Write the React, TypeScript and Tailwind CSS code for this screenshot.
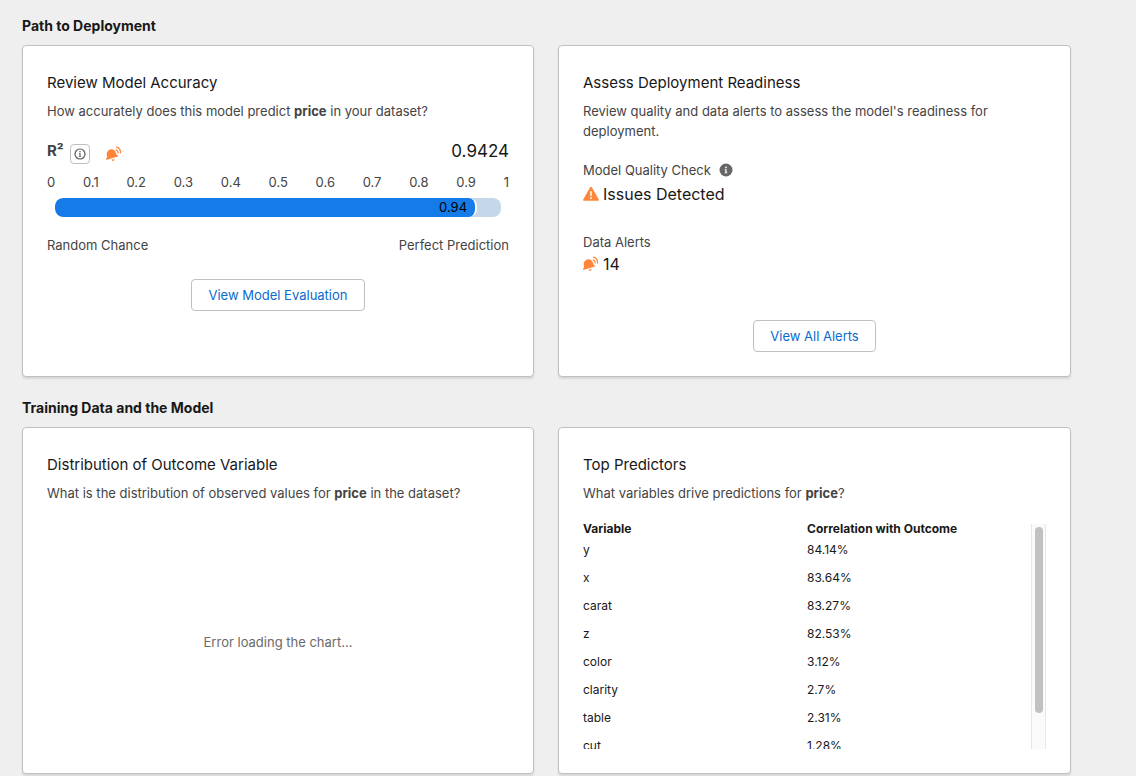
import type { ReactNode } from "react";

const predictors = [
  ["y", "84.14%"],
  ["x", "83.64%"],
  ["carat", "83.27%"],
  ["z", "82.53%"],
  ["color", "3.12%"],
  ["clarity", "2.7%"],
  ["table", "2.31%"],
  ["cut", "1.28%"],
];

const ticks = ["0", "0.1", "0.2", "0.3", "0.4", "0.5", "0.6", "0.7", "0.8", "0.9", "1"];

function BellIcon() {
  return (
    <svg viewBox="0 0 48 48" className="size-4 shrink-0 text-[#ff8538]" fill="none" aria-hidden="true">
      <path
        fill="currentColor"
        d="M3 41c-2.500.8-3.800-1.500-2-3.500 2.500-3 2.500-6 1.500-10C.9 20 5 12.500 12.500 10.500c7-2 13 1 16 7 2 4 1.800 7 3.500 9 1 1.200 2 1.500 3.500 1.700 2.300.3 2.500 2.800.3 3.600Z"
      />
      <path fill="currentColor" d="M16.500 41.500l8.500-2.800c1 2.500-.2 5-3 5.800-2.600.7-4.900-.5-5.500-3Z" />
      <path stroke="currentColor" strokeWidth="3.600" strokeLinecap="round" d="M30.500 11.500c3.800 1.500 6 5 6 9.500M31.500 3.500c8 1.800 12.500 8.500 12 17.500" />
    </svg>
  );
}

function WarningIcon() {
  return (
    <svg viewBox="0 0 16 16" className="size-4 shrink-0" aria-hidden="true">
      <path
        fill="#ff8538"
        d="M7.200 1.300c.35-.7 1.250-.7 1.600 0l7 12.100c.4.7 0 1.300-.7 1.300H.9c-.7 0-1.100-.6-.7-1.300z"
      />
      <path d="M8 5.800v3.800" stroke="#fff" strokeWidth="1.500" strokeLinecap="round" />
      <circle cx="8" cy="12" r=".95" fill="#fff" />
    </svg>
  );
}

function InfoSolidIcon() {
  return (
    <svg viewBox="0 0 14 14" className="size-3.5" aria-hidden="true">
      <circle cx="7" cy="7" r="6.500" fill="#666" />
      <circle cx="7" cy="4.400" r=".9" fill="#fff" />
      <path d="M5.700 6.200H7.600V9.500H8.400V10.200H5.600V9.500H6.300V6.900H5.700z" fill="#fff" />
    </svg>
  );
}

function InfoOutlineIcon() {
  return (
    <svg viewBox="0 0 12 12" className="size-3" aria-hidden="true">
      <circle cx="6" cy="6" r="5" fill="none" stroke="#5c5c5c" strokeWidth="1.200" />
      <circle cx="6" cy="3.700" r=".8" fill="#5c5c5c" />
      <path d="M4.900 5.200H6.600V8H7.300V8.700H4.700V8H5.400V5.900H4.900z" fill="#5c5c5c" />
    </svg>
  );
}

function Card({ title, text, children }: { title: string; text: ReactNode; children: ReactNode }) {
  return (
    <article className="flex flex-col rounded border border-[#c0c0c0] bg-white p-6 shadow-[0_2px_2px_rgba(0,0,0,0.1)]">
      <h3 className="text-[15px] leading-[26px] text-[#181818]">{title}</h3>
      <p className="mt-[5px] text-[13px] leading-5">{text}</p>
      {children}
    </article>
  );
}

function ActionButton({ children }: { children: ReactNode }) {
  return (
    <button
      type="button"
      className="h-8 self-center rounded border border-[#c0c0c0] bg-white px-4 pt-0.5 text-[13px] text-[#0b6bcb]"
    >
      {children}
    </button>
  );
}

function AccuracyCard() {
  const score = 0.9424;
  return (
    <Card
      title="Review Model Accuracy"
      text={
        <>
          How accurately does this model predict <b>price</b> in your dataset?
        </>
      }
    >
      <div className="mt-4 flex h-7 items-center">
        <span className="text-[15px] font-bold">R²</span>
        <button
          type="button"
          aria-label="About R²"
          className="mt-1.5 ml-1.5 flex size-5 items-center justify-center rounded-sm border border-[#c0c0c0] bg-white"
        >
          <InfoOutlineIcon />
        </button>
        <span className="mt-1.5 ml-4">
          <BellIcon />
        </span>
        <span className="ml-auto text-[17px] leading-7 text-[#181818]">{score}</span>
      </div>
      <div className="mt-[7px] flex justify-between text-[13px] leading-5">
        {ticks.map((tick) => (
          <span key={tick}>{tick}</span>
        ))}
      </div>
      <div className="mx-2 mt-1.5 h-[19px] overflow-hidden rounded-lg bg-[#c5d8ea]">
        <div
          className="h-full rounded-lg border-r-2 border-white bg-[#147be8] pr-2 text-right text-[13px] leading-[19px] text-black"
          style={{ width: `${score * 100 + 0.4}%` }}
        >
          0.94
        </div>
      </div>
      <div className="mt-[18px] flex justify-between text-[13px] leading-5">
        <span>Random Chance</span>
        <span>Perfect Prediction</span>
      </div>
      <div className="mt-6 flex flex-col">
        <ActionButton>View Model Evaluation</ActionButton>
      </div>
    </Card>
  );
}

function ReadinessCard() {
  return (
    <Card
      title="Assess Deployment Readiness"
      text="Review quality and data alerts to assess the model's readiness for deployment."
    >
      <div className="mt-[19px] flex items-center gap-2 text-[13px] leading-5">
        Model Quality Check
        <button type="button" aria-label="About the model quality check">
          <InfoSolidIcon />
        </button>
      </div>
      <div className="flex items-center gap-1 text-base leading-7 text-[#181818]">
        <WarningIcon />
        Issues Detected
      </div>
      <div className="mt-6 text-[13px] leading-5">Data Alerts</div>
      <div className="flex items-center gap-1 text-base leading-6 text-[#181818]">
        <BellIcon />
        14
      </div>
      <div className="mt-11 flex flex-col">
        <ActionButton>View All Alerts</ActionButton>
      </div>
    </Card>
  );
}

function DistributionCard() {
  return (
    <Card
      title="Distribution of Outcome Variable"
      text={
        <>
          What is the distribution of observed values for <b>price</b> in the dataset?
        </>
      }
    >
      <div className="flex grow items-center justify-center pt-[34px] text-[13px] text-[#6a6a6a]">
        Error loading the chart...
      </div>
    </Card>
  );
}

function PredictorsCard() {
  return (
    <Card
      title="Top Predictors"
      text={
        <>
          What variables drive predictions for <b>price</b>?
        </>
      }
    >
      <div className="mt-[19px] flex h-[227px]">
        <div className="h-full min-w-0 grow overflow-y-auto [scrollbar-width:none]">
          <table className="w-full table-fixed border-collapse text-left text-xs text-[#181818]">
            <thead>
              <tr>
                <th className="p-0 leading-[14px] font-bold">Variable</th>
                <th className="p-0 leading-[14px] font-bold">Correlation with Outcome</th>
              </tr>
            </thead>
            <tbody>
              {predictors.map(([name, value]) => (
                <tr key={name} className="h-7">
                  <td className="p-0">{name}</td>
                  <td className="p-0">{value}</td>
                </tr>
              ))}
            </tbody>
          </table>
        </div>
        <div className="mt-0.5 w-[15px] shrink-0 border-x border-[#e6e6e6] bg-[#fafafa] py-[3px] pr-0.5 pl-[3px]">
          <div className="h-[186px] rounded-full bg-[#c1c1c1]" />
        </div>
      </div>
    </Card>
  );
}

export default function App() {
  return (
    <main
      className="min-h-screen bg-[#efefef] pt-4 pr-[65px] pl-[22px] text-[#444]"
      style={{ fontFamily: 'Inter, "Liberation Sans", sans-serif' }}
    >
      <section>
        <h2 className="text-sm leading-5 font-bold text-[#181818]">Path to Deployment</h2>
        <div className="mt-[9px] grid min-h-[332px] grid-cols-[512fr_513fr] gap-6">
          <AccuracyCard />
          <ReadinessCard />
        </div>
      </section>
      <section className="pt-[21px]">
        <h2 className="text-sm leading-5 font-bold text-[#181818]">Training Data and the Model</h2>
        <div className="mt-[9px] grid grid-cols-[512fr_513fr] gap-6">
          <DistributionCard />
          <PredictorsCard />
        </div>
      </section>
    </main>
  );
}
